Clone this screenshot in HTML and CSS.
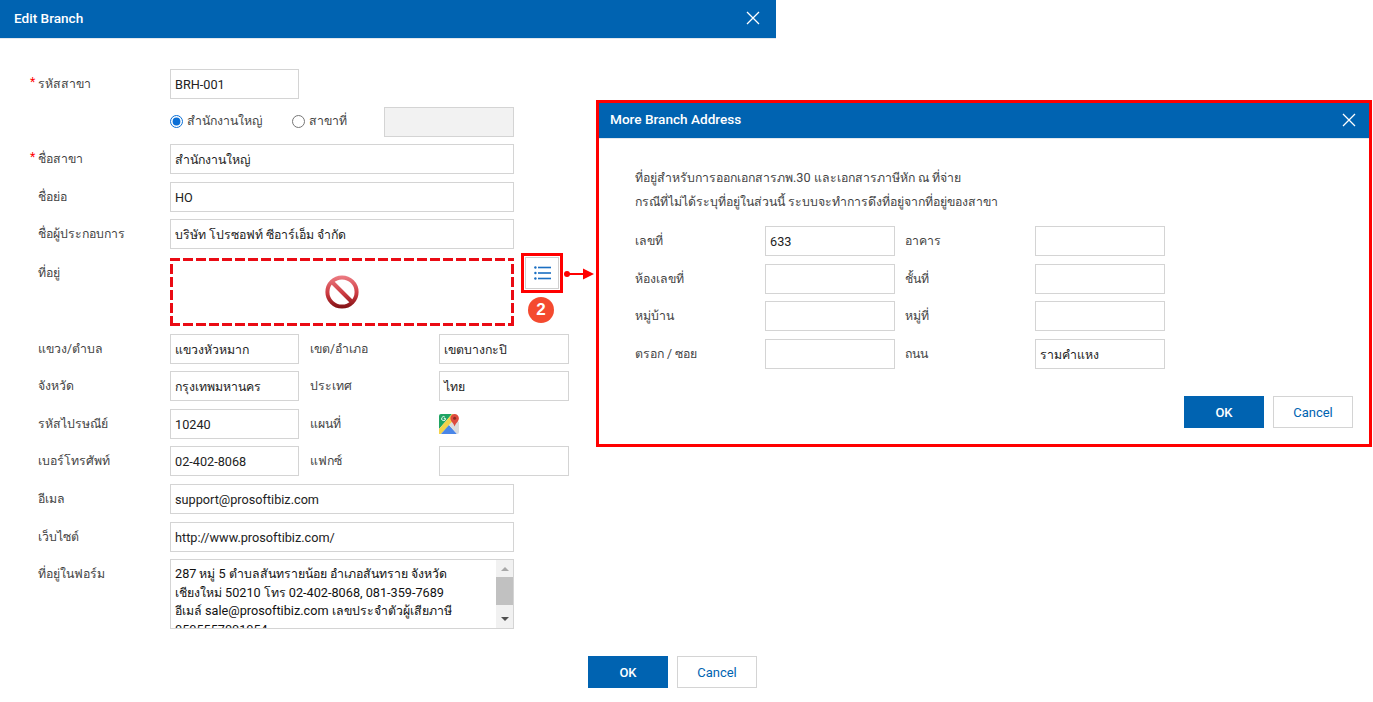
FILE: index.html
```html
<!DOCTYPE html>
<html lang="th">
<head>
<meta charset="utf-8">
<title>Edit Branch</title>
<link rel="stylesheet" href="styles.css">
</head>
<body>
<main class="dialog">
  <header class="head head-main">
    <h1 class="title">Edit Branch</h1>
    <svg class="close" viewBox="0 0 14 14"><path d="M1 1l12 12M13 1L1 13"/></svg>
  </header>
  <form class="form">
    <div class="row"><label class="lab"><span class="req">*</span>รหัสสาขา</label><div class="field narrow en">BRH-001</div></div>
    <div class="row">
      <div class="spacer"></div>
      <label class="radio radio-a"><input type="radio" name="t" checked>สำนักงานใหญ่</label>
      <label class="radio radio-b"><input type="radio" name="t">สาขาที่</label>
      <div class="field disabled"></div>
    </div>
    <div class="row"><label class="lab"><span class="req">*</span>ชื่อสาขา</label><div class="field wide">สำนักงานใหญ่</div></div>
    <div class="row"><label class="lab">ชื่อย่อ</label><div class="field wide en">HO</div></div>
    <div class="row"><label class="lab">ชื่อผู้ประกอบการ</label><div class="field wide">บริษัท โปรซอฟท์ ซีอาร์เอ็ม จำกัด</div></div>
    <div class="row row-address">
      <label class="lab">ที่อยู่</label>
      <div class="blocked">
        <svg class="no-icon" viewBox="0 0 34 34">
          <defs><linearGradient id="ng" gradientUnits="userSpaceOnUse" x1="0" y1="0" x2="0" y2="34"><stop offset="0" stop-color="#ee7f86"/><stop offset=".55" stop-color="#cc3a40"/><stop offset="1" stop-color="#7c0f12"/></linearGradient></defs>
          <circle cx="17" cy="17" r="14.6" fill="#fff" stroke="url(#ng)" stroke-width="4"/>
          <path d="M7 7l20 20" stroke="url(#ng)" stroke-width="4"/>
        </svg>
      </div>
      <button type="button" class="list-btn">
        <svg viewBox="0 0 17 14"><g fill="#1b6fc2"><circle cx="1.4" cy="1.5" r="1.2"/><circle cx="1.4" cy="7" r="1.2"/><circle cx="1.4" cy="12.5" r="1.2"/><rect x="4" y=".7" width="13" height="1.6"/><rect x="4" y="6.2" width="13" height="1.6"/><rect x="4" y="11.7" width="13" height="1.6"/></g></svg>
      </button>
      <span class="badge">2</span>
      <svg class="arrow" viewBox="0 0 32 14"><circle cx="4" cy="7" r="3" fill="#f00"/><path d="M4 6h20v2H4z" fill="#f00"/><path d="M20 1.5L31 7 20 12.5z" fill="#f00"/></svg>
    </div>
    <div class="row"><label class="lab">แขวง/ตำบล</label><div class="field narrow">แขวงหัวหมาก</div><label class="lab2">เขต/อำเภอ</label><div class="field narrow">เขตบางกะปิ</div></div>
    <div class="row"><label class="lab">จังหวัด</label><div class="field narrow">กรุงเทพมหานคร</div><label class="lab2">ประเทศ</label><div class="field narrow">ไทย</div></div>
    <div class="row"><label class="lab">รหัสไปรษณีย์</label><div class="field narrow en">10240</div><label class="lab2">แผนที่</label>
      <svg class="map" viewBox="0 0 20 20">
        <path d="M2 0h11L0 15V2a2 2 0 0 1 2-2z" fill="#1fa463"/>
        <path d="M0 15L13 0h1l2 5L2 20H0z" fill="#f3d24a"/>
        <path d="M2 20l8-9 8 9z" fill="#4a86e8"/>
        <path d="M10 11l6-6 4 3v10a2 2 0 0 1-2 2z" fill="#dcdcdc"/>
        <path d="M15.6 0a4.3 4.3 0 0 1 4.3 4.3c0 3-3 4.7-4.3 8.2-1.1-3.5-4.2-5.2-4.2-8.2A4.2 4.2 0 0 1 15.6 0z" fill="#dd4b3e"/>
        <circle cx="15.6" cy="4.3" r="1.5" fill="#8e2a22"/>
        <path d="M6.6 4.6a2 2 0 1 1-.7-1.5" fill="none" stroke="#fff" stroke-width=".9"/>
        <path d="M4.8 4.6h1.9" stroke="#fff" stroke-width=".9"/>
      </svg>
    </div>
    <div class="row"><label class="lab">เบอร์โทรศัพท์</label><div class="field narrow en">02-402-8068</div><label class="lab2">แฟกซ์</label><div class="field narrow"></div></div>
    <div class="row"><label class="lab">อีเมล</label><div class="field wide en">support@prosoftibiz.com</div></div>
    <div class="row"><label class="lab">เว็บไซต์</label><div class="field wide en">http://www.prosoftibiz.com/</div></div>
    <div class="row row-area">
      <label class="lab">ที่อยู่ในฟอร์ม</label>
      <div class="area">
        <div class="area-text">
          <div class="line"><span class="en">287</span> หมู่ <span class="en">5</span> ตำบลสันทรายน้อย อำเภอสันทราย จังหวัด</div>
          <div class="line">เชียงใหม่ <span class="en">50210</span> โทร <span class="en">02-402-8068, 081-359-7689</span></div>
          <div class="line">อีเมล์ <span class="en">sale@prosoftibiz.com</span> เลขประจำตัวผู้เสียภาษี</div>
          <div class="line en">0505557001054</div>
        </div>
        <div class="scroll"><i class="up"></i><b class="thumb"></b><i class="down"></i></div>
      </div>
    </div>
    <div class="actions actions-main">
      <button type="button" class="btn ok">OK</button>
      <button type="button" class="btn cancel">Cancel</button>
    </div>
  </form>
</main>

<section class="popup">
  <header class="head head-popup">
    <h2 class="title">More Branch Address</h2>
    <svg class="close" viewBox="0 0 14 14"><path d="M1 1l12 12M13 1L1 13"/></svg>
  </header>
  <div class="popup-body">
    <p class="note">ที่อยู่สำหรับการออกเอกสารภพ.<span class="en">30</span> และเอกสารภาษีหัก ณ ที่จ่าย</p>
    <p class="note">กรณีที่ไม่ได้ระบุที่อยู่ในส่วนนี้ ระบบจะทำการดึงที่อยู่จากที่อยู่ของสาขา</p>
    <div class="popup-form">
      <div class="row"><label class="plab">เลขที่</label><div class="field narrow en">633</div><label class="plab2">อาคาร</label><div class="field narrow"></div></div>
      <div class="row"><label class="plab">ห้องเลขที่</label><div class="field narrow"></div><label class="plab2">ชั้นที่</label><div class="field narrow"></div></div>
      <div class="row"><label class="plab">หมู่บ้าน</label><div class="field narrow"></div><label class="plab2">หมู่ที่</label><div class="field narrow"></div></div>
      <div class="row"><label class="plab">ตรอก / ซอย</label><div class="field narrow"></div><label class="plab2">ถนน</label><div class="field narrow">รามคำแหง</div></div>
    </div>
    <div class="actions actions-popup">
      <button type="button" class="btn ok">OK</button>
      <button type="button" class="btn cancel">Cancel</button>
    </div>
  </div>
</section>
</body>
</html>
```

FILE: styles.css
```css
* { box-sizing: border-box; }
html, body { margin: 0; padding: 0; }
body {
  position: relative;
  width: 1373px;
  height: 702px;
  overflow: hidden;
  background: #fff;
  color: #444;
  font: 12.3px/1.2 Roboto, "Noto Sans", sans-serif;
}
.en { font-size: 12.7px; }
.dialog { width: 776px; }
.head {
  display: flex;
  align-items: center;
  justify-content: space-between;
  background: #0063b1;
  color: #fff;
  border-bottom: 1px solid #e3e8ee;
}
.head-main { height: 39px; padding: 0 16px 2px 14px; }
.head-popup { height: 36px; padding: 0 13px 2px 11px; }
.title { margin: 0; font-size: 13.6px; font-weight: 500; }
.close { width: 14px; height: 14px; fill: none; stroke: #fff; stroke-width: 1.3; }
.form { padding: 30px 0 0 38px; position: relative; }
.row { display: flex; align-items: stretch; height: 30px; margin-bottom: 7.6px; position: relative; }
.lab { width: 132px; line-height: 30px; position: relative; }
.lab2 { width: 129px; margin-left: 11px; line-height: 30px; }
.plab { width: 130px; line-height: 30px; }
.plab2 { width: 130px; margin-left: 10px; line-height: 30px; }
.req { position: absolute; left: -8px; top: -2px; color: #f00; }
.spacer { width: 132px; }
.field {
  border: 1px solid #d4d4d4;
  padding: 0 4px;
  line-height: 30px;
  color: #222;
  white-space: nowrap;
  overflow: hidden;
}
.field.en { line-height: 29px; }
.narrow { width: 129px; }
.lab2 + .narrow, .popup-form .narrow { width: 130px; }
.wide { width: 344px; }
.disabled { width: 130px; background: #f2f2f2; }
.radio { display: flex; align-items: center; }
.radio input { margin: 0 4px 0 0; width: 13px; height: 13px; accent-color: #0b6fd6; }
.radio-a { width: 122px; }
.radio-b { width: 92px; }
.row-address { height: 68px; margin-top: 8.6px; margin-bottom: 7.7px; }
.blocked {
  width: 344px;
  background:
    repeating-linear-gradient(90deg, #ea0b14 0 10px, transparent 10px 13px) top / 100% 3px no-repeat,
    repeating-linear-gradient(90deg, #ea0b14 0 10px, transparent 10px 13px) bottom / 100% 3px no-repeat,
    repeating-linear-gradient(0deg, #ea0b14 0 10px, transparent 10px 13px) left / 3px 100% no-repeat,
    repeating-linear-gradient(0deg, #ea0b14 0 10px, transparent 10px 13px) right / 3px 100% no-repeat;
  display: flex;
  align-items: center;
  justify-content: center;
}
.no-icon { width: 34px; height: 34px; }
.list-btn {
  position: absolute;
  left: 483px;
  top: -5px;
  width: 42px;
  height: 40px;
  padding: 0;
  background: #fff;
  border: 3px solid #f00;
  box-shadow: inset 0 0 0 1px #fff, inset 0 0 0 2px #cfcfcf;
  display: flex;
  align-items: center;
  justify-content: center;
}
.list-btn svg { width: 17px; height: 14px; }
.badge {
  position: absolute;
  left: 490px;
  top: 39px;
  width: 26px;
  height: 26px;
  border-radius: 50%;
  background: #f44a2f;
  color: #fff;
  font: 700 17px/26px "Liberation Sans", sans-serif;
  text-align: center;
}
.arrow { position: absolute; left: 525px; top: 9px; width: 32px; height: 14px; }
.map { width: 20px; height: 20px; margin-top: 5px; flex: none; }
.row-area { height: 70px; margin-bottom: 27px; }
.area {
  width: 344px;
  height: 70px;
  border: 1px solid #d4d4d4;
  display: flex;
  overflow: hidden;
}
.area-text {
  flex: 1;
  padding: 5px 4px 0;
  line-height: 18.5px;
  color: #111;
  white-space: nowrap;
  overflow: hidden;
}
.line { height: 18.5px; }
.scroll {
  width: 17px;
  flex: none;
  background: #f1f1f1;
  display: flex;
  flex-direction: column;
  align-items: center;
}
.thumb { display: block; width: 100%; height: 28px; margin-top: 6px; background: #c1c1c1; flex: none; }
.up, .down { display: block; width: 0; height: 0; flex: none; border-left: 4px solid transparent; border-right: 4px solid transparent; }
.up { margin-top: 7px; border-bottom: 4px solid #a8a8a8; }
.down { margin-top: 12px; border-top: 4px solid #505050; }
.actions { display: flex; gap: 9px; }
.actions-main { padding-left: 550px; }
.popup {
  position: absolute;
  left: 596px;
  top: 100px;
  width: 776px;
  height: 347px;
  border: 3px solid #f00;
  background: #fff;
}
.popup-body { padding: 27px 16px 0 36px; }
.note { margin: 0; height: 24px; line-height: 24px; }
.popup-form { margin-top: 12px; }
.popup-form .row:last-child { margin-bottom: 0; }
.actions-popup { justify-content: flex-end; margin-top: 27px; }
.btn { width: 80px; height: 32px; padding: 2px 0 0; font: inherit; font-size: 13px; cursor: pointer; }
.ok { background: #0063b1; color: #fff; border: 0; font-weight: 500; }
.cancel { background: #fff; color: #0063b1; border: 1px solid #d4d4d4; }
```
